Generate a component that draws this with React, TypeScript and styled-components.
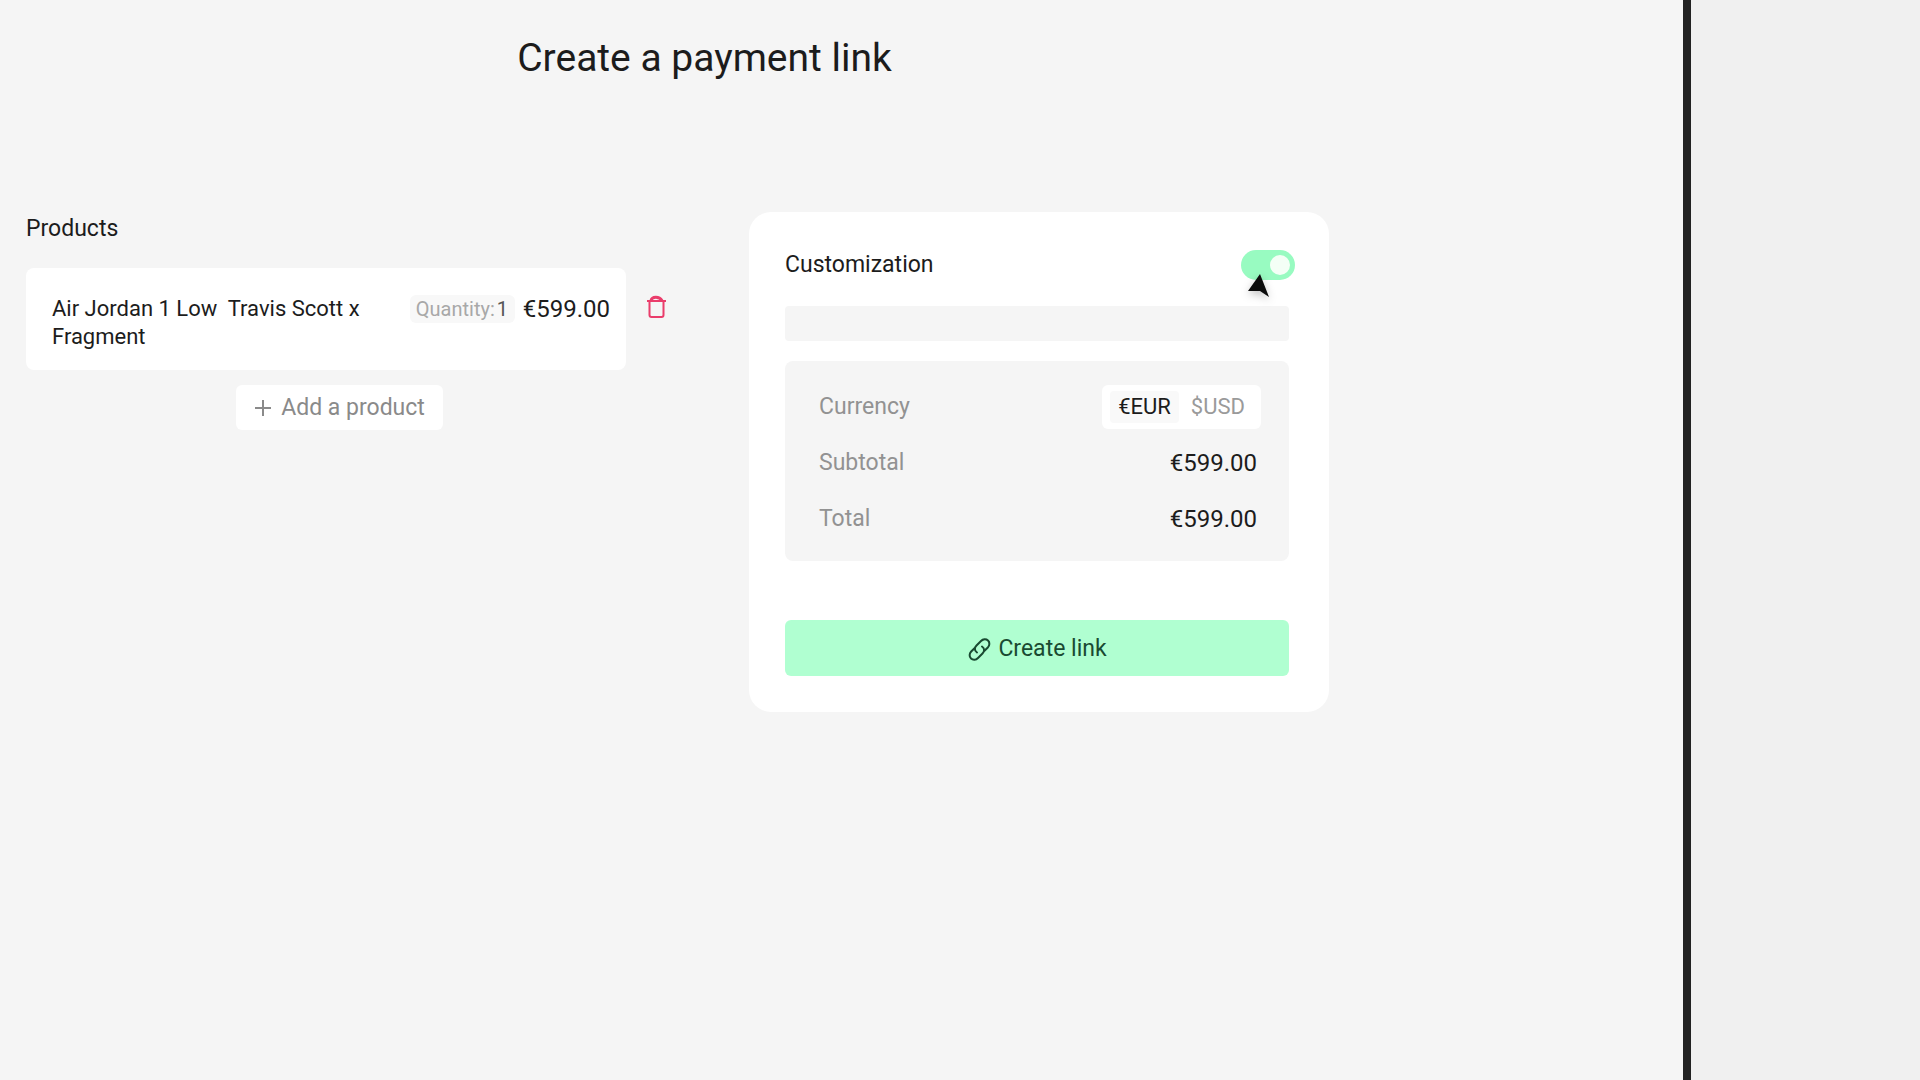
import React, { useState } from "react";
import styled, { createGlobalStyle } from "styled-components";

const GlobalStyle = createGlobalStyle`
  *, *::before, *::after { box-sizing: border-box; }
  body {
    margin: 0;
    background: #f5f5f5;
    color: #1c1c1c;
    font-family: Roboto, "Liberation Sans", sans-serif;
    font-size: 22px;
    line-height: 28px;
  }
  button, input { font: inherit; color: inherit; }
`;

const Shell = styled.div`
  display: flex;
  min-height: 100vh;
`;

const Page = styled.main`
  flex: 1;
  min-width: 0;
  padding: 32px 300px 80px 26px;
  background: #f5f5f5;
  border-right: 8px solid #222222;
`;

const Backdrop = styled.aside`
  flex: 0 0 229px;
  background: #f0f0f0;
`;

const Title = styled.h1`
  margin: 0 0 128px;
  font-size: 39px;
  line-height: 52px;
  font-weight: 400;
  text-align: center;
`;

const Columns = styled.div`
  display: grid;
  grid-template-columns: minmax(0, 641fr) minmax(0, 580fr);
  column-gap: 82px;
  align-items: start;
  padding-right: 54px;
`;

const Products = styled.section`
  display: flex;
  flex-direction: column;
  padding-top: 3px;
`;

const SectionTitle = styled.h2`
  margin: 0;
  font-size: 23px;
  line-height: 28px;
  font-weight: 400;
`;

const ProductRow = styled.div`
  display: flex;
  align-items: flex-start;
  gap: 20px;
  margin-top: 25px;
`;

const ProductCard = styled.article`
  flex: 1;
  min-width: 0;
  display: flex;
  align-items: flex-start;
  gap: 8px;
  padding: 27px 16px 19px 26px;
  background: #ffffff;
  border-radius: 8px;
`;

const ProductName = styled.div`
  flex: 1;
  min-width: 0;
  padding-right: 24px;
  white-space: pre-wrap;
`;

const Quantity = styled.label`
  display: flex;
  align-items: center;
  gap: 2px;
  padding: 0 6px;
  background: #f8f8f8;
  border-radius: 6px;
  color: #a8a8a8;
  font-size: 20px;
`;

const QuantityInput = styled.input`
  width: 12px;
  padding: 0;
  border: 0;
  background: transparent;
  color: #555555;
`;

const Price = styled.span`
  font-size: 24px;
`;

const IconButton = styled.button`
  display: flex;
  margin-top: 27px;
  padding: 0;
  border: 0;
  background: none;
  color: #ea3d6b;
  cursor: pointer;
`;

const AddButton = styled.button`
  display: flex;
  align-items: center;
  align-self: center;
  gap: 9px;
  margin: 15px 14px 0 0;
  padding: 9px 18px 8px;
  border: 0;
  border-radius: 6px;
  background: #ffffff;
  color: #8a8a8a;
  font-size: 23px;
  cursor: pointer;
`;

const Summary = styled.section`
  padding: 38px 34px 36px 36px;
  background: #ffffff;
  border-radius: 22px;
`;

const SummaryHeader = styled.label`
  display: flex;
  align-items: center;
  justify-content: space-between;
`;

const SwitchWrap = styled.span`
  position: relative;
  display: flex;
`;

const Switch = styled.input`
  appearance: none;
  width: 54px;
  height: 30px;
  margin: 0;
  padding: 5px;
  border-radius: 15px;
  background: #cfcfcf;
  cursor: pointer;

  &::before {
    content: "";
    display: block;
    width: 20px;
    height: 20px;
    border-radius: 50%;
    background: #f4fff6;
  }
  &:checked { background: #98fbc1; }
  &:checked::before { margin-left: 24px; }
`;

const Pointer = styled.svg`
  position: absolute;
  left: 4px;
  top: 22px;
  filter: drop-shadow(0 3px 4px rgba(0, 0, 0, 0.25));
`;

const SummaryBody = styled.div`
  padding-right: 6px;
`;

const CustomField = styled.div`
  height: 35px;
  margin-top: 26px;
  background: #f5f5f5;
  border-radius: 4px;
`;

const Totals = styled.dl`
  display: grid;
  row-gap: 12px;
  margin: 20px 0 0;
  padding: 24px 28px 20px 34px;
  background: #f5f5f5;
  border-radius: 8px;
`;

const TotalRow = styled.div`
  display: flex;
  align-items: center;
  justify-content: space-between;
  min-height: 44px;
`;

const Term = styled.dt`
  color: #929292;
  font-size: 23px;
`;

const Amount = styled.dd<{ $inset?: boolean }>`
  margin: 0;
  padding-right: ${(p) => (p.$inset ? 4 : 0)}px;
  font-size: ${(p) => (p.$inset ? 24 : 22)}px;
`;

const CurrencyPicker = styled.fieldset`
  display: flex;
  gap: 4px;
  margin: 0;
  padding: 6px 8px;
  border: 0;
  border-radius: 6px;
  background: #ffffff;
`;

const CurrencyOption = styled.label<{ $active: boolean }>`
  padding: 2px 8px;
  border-radius: 4px;
  background: ${(p) => (p.$active ? "#f9f9f9" : "transparent")};
  color: ${(p) => (p.$active ? "#1c1c1c" : "#9a9a9a")};
  cursor: pointer;
`;

const HiddenRadio = styled.input`
  position: absolute;
  opacity: 0;
  pointer-events: none;
`;

const CreateButton = styled.button`
  display: flex;
  align-items: center;
  justify-content: center;
  gap: 6px;
  width: 100%;
  margin-top: 59px;
  padding: 15px 14px 13px;
  border: 0;
  border-radius: 6px;
  background: #b0ffd1;
  color: #194a31;
  font-size: 23px;
  cursor: pointer;
`;

const currencies = [
  { code: "EUR", symbol: "€" },
  { code: "USD", symbol: "$" },
];

function TrashIcon() {
  return (
    <svg width="21" height="24" viewBox="0 0 21 24" fill="none" stroke="currentColor" strokeWidth="2" aria-hidden="true">
      <path d="M1 6h19" />
      <path d="M5 5.500c1-4 8-4.500 11 0" strokeWidth="3" />
      <path d="M3.500 6v14q0 2 2 2h10q2 0 2-2V6" />
    </svg>
  );
}

function PlusIcon() {
  return (
    <svg width="18" height="18" viewBox="0 0 18 18" fill="none" stroke="currentColor" strokeWidth="2" aria-hidden="true">
      <path d="M9 1v16M1 9h16" />
    </svg>
  );
}

function LinkIcon() {
  return (
    <svg width="25" height="25" viewBox="0 0 25 25" fill="none" stroke="currentColor" strokeWidth="2" strokeLinecap="round" aria-hidden="true">
      <path d="M10 15.500c-3-2-2.500-5-.5-7l4.500-4.500c2-2 5-2.300 7-.5s1.700 5-.2 7l-3.300 3.300" />
      <path d="M15 9.500c3 2 2.500 5 .5 7L11 21c-2 2-5 2.300-7 .5s-1.700-5 .2-7l3.300-3.300" />
    </svg>
  );
}

export default function App() {
  const [custom, setCustom] = useState(true);
  const [currency, setCurrency] = useState("EUR");
  const [quantity, setQuantity] = useState("1");

  return (
    <Shell>
      <GlobalStyle />
      <Page>
        <Title>Create a payment link</Title>
        <Columns>
          <Products>
            <SectionTitle>Products</SectionTitle>
            <ProductRow>
              <ProductCard>
                <ProductName>{"Air Jordan 1 Low  Travis Scott x Fragment"}</ProductName>
                <Quantity>
                  Quantity:
                  <QuantityInput value={quantity} onChange={(e) => setQuantity(e.target.value)} />
                </Quantity>
                <Price>€599.00</Price>
              </ProductCard>
              <IconButton type="button" aria-label="Remove product">
                <TrashIcon />
              </IconButton>
            </ProductRow>
            <AddButton type="button">
              <PlusIcon />
              Add a product
            </AddButton>
          </Products>

          <Summary>
            <SummaryHeader>
              <SectionTitle as="span">Customization</SectionTitle>
              <SwitchWrap>
                <Switch type="checkbox" role="switch" checked={custom} onChange={(e) => setCustom(e.target.checked)} />
                <Pointer width="28" height="28" viewBox="0 0 28 28" aria-hidden="true">
                  <path d="M15 2l9 23-9-6H3z" fill="#0c0c0c" />
                </Pointer>
              </SwitchWrap>
            </SummaryHeader>
            <SummaryBody>
              <CustomField />
              <Totals>
                <TotalRow>
                  <Term>Currency</Term>
                  <Amount>
                    <CurrencyPicker aria-label="Currency">
                      {currencies.map(({ code, symbol }) => (
                        <CurrencyOption key={code} $active={currency === code}>
                          <HiddenRadio
                            type="radio"
                            name="currency"
                            checked={currency === code}
                            onChange={() => setCurrency(code)}
                          />
                          {symbol + code}
                        </CurrencyOption>
                      ))}
                    </CurrencyPicker>
                  </Amount>
                </TotalRow>
                <TotalRow>
                  <Term>Subtotal</Term>
                  <Amount $inset>€599.00</Amount>
                </TotalRow>
                <TotalRow>
                  <Term>Total</Term>
                  <Amount $inset>€599.00</Amount>
                </TotalRow>
              </Totals>
              <CreateButton type="button">
                <LinkIcon />
                Create link
              </CreateButton>
            </SummaryBody>
          </Summary>
        </Columns>
      </Page>
      <Backdrop />
    </Shell>
  );
}
